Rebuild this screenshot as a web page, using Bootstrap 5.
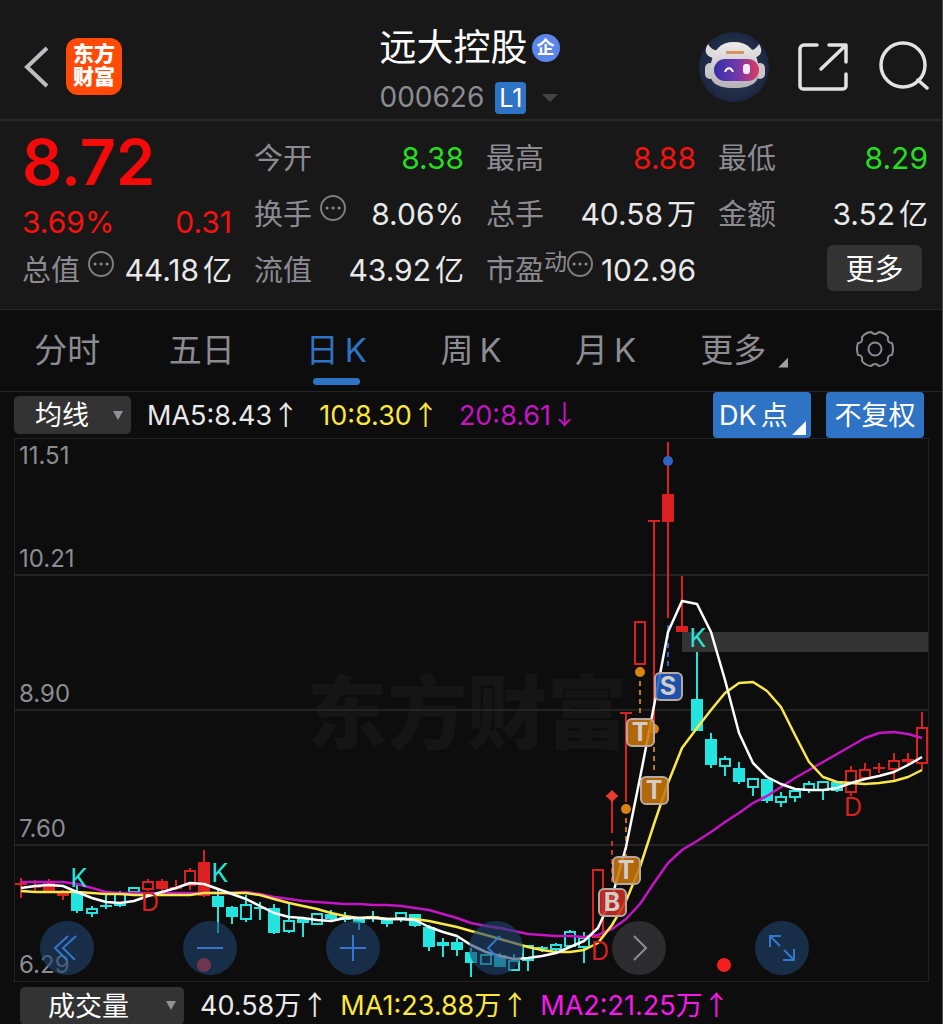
<!DOCTYPE html>
<html lang="zh-CN" data-bs-theme="dark">
<head>
<meta charset="utf-8">
<meta name="viewport" content="width=device-width, initial-scale=1">
<title>远大控股 000626</title>
<link href="https://cdn.jsdelivr.net/npm/bootstrap@5.3.0/dist/css/bootstrap.min.css" rel="stylesheet">
<style>
  :root { --panel:#181818; --ink:#e9e9ea; --dim:#8b8b91; --blue:#2f73c5; --up:#f5120f; --down:#27dd22; --yellow:#fbe73f; --purple:#c414c4; }
  body { background:#0d0d0d; color:var(--ink); font-family:Inter,"Noto Sans CJK SC",sans-serif; line-height:1.2; border-right:1px solid #4a4a4a; }
  svg { display:block; }
  .icon-btn { background:none; border:0; padding:0; color:#e2e2e2; }
  .topbar { background:var(--panel); border-bottom:2px solid #272727; height:121px; display:grid; grid-template-columns:1fr auto 1fr; padding:14px 13px 0 10px; }
  .topbar-start { padding-left:14px; }
  .brand { width:56px; height:57px; border-radius:12px; background:#ff4a08; color:#fff; font-weight:900; font-size:21px; line-height:23px; }
  .title-block { padding-top:10px; }
  .stock-name { font-size:37px; line-height:48px; font-weight:400; }
  .firm { width:28px; height:28px; border-radius:50%; background:#5b85e8; color:#fff; font-size:18px; font-weight:700; line-height:28px; }
  .code-row { padding-top:9px; }
  .code { font-size:28px; color:var(--dim); }
  .level { width:31px; height:32px; border-radius:4px; background:var(--blue); color:#fff; font-size:25px; line-height:32px; margin-left:11px; }
  .tri-down { border:8px solid transparent; border-top-color:#444; border-bottom:0; }
  .quotes { background:var(--panel); border-bottom:1px solid #262626; display:grid; grid-template-columns:repeat(4,1fr); column-gap:22px; padding:9px 14px 11px 22px; font-size:30px; }
  .cell { height:56px; display:flex; align-items:center; justify-content:space-between; white-space:nowrap; }
  .cell .tag { color:var(--dim); display:flex; font-size:29px; padding-top:3px; }
  .cell .hint { margin-top:-3px; }
  .cell sup { font-size:23px; top:-6px; line-height:29px; }
  .unit { margin-left:4px; font-size:29px; }
  .price { font-size:63px; line-height:64px; height:72px; font-weight:600; color:#f40a08; }
  .delta { height:40px; color:var(--up); }
  .up { color:var(--up); } .down { color:var(--down); }
  .more-btn { width:95px; height:46px; background:#333; border-radius:6px; border:0; color:#fff; font-size:29px; line-height:46px; padding:2px 0 0; margin:0 6px 4px 0; }
  .periods { height:82px; border-bottom:1px solid #242424; }
  .periods .nav-item { flex:1 1 0; }
  .periods .nav-link { height:81px; padding:0; color:var(--dim); font-size:33px; display:flex; align-items:center; justify-content:center; position:relative; }
  .periods .nav-link.active { color:var(--blue); }
  .periods .nav-link.active::after { content:""; position:absolute; bottom:6px; width:47px; height:7px; border-radius:4px; background:var(--blue); }
  .latin { margin-left:6px; }
  .corner { width:10px; height:10px; background:#a0a0a4; clip-path:polygon(100% 0,100% 100%,0 100%); }
  .more-tab .nav-link { padding-left:8px; }
  .more-tab .corner { margin:24px 0 0 12px; }
  .legend-bar { height:46px; padding:0 18px 0 14px; font-size:27px; white-space:nowrap; }
  .legend-bar > span { padding-top:2px; }
  .legend-bar > span + span { margin-left:20px; }
  .trend { font-family:"Noto Sans CJK SC",sans-serif; line-height:1; }
  .picker { background:#333 url("data:image/svg+xml,%3Csvg xmlns='http://www.w3.org/2000/svg' viewBox='0 0 10 9'%3E%3Cpath d='M0 0h10L5 9z' fill='%23909095'/%3E%3C/svg%3E") no-repeat right 8px center/10px 9px; border:0; border-radius:5px; color:#fff; appearance:none; font-size:27px; padding:2px 0 0 21px; width:117px; height:38px; line-height:36px; }
  .picker.wide { width:164px; padding-left:28px; }
  .tool { height:46px; width:98px; border:0; border-radius:4px; background:var(--blue); color:#fff; font-size:27px; padding:2px 0 0; position:relative; }
  .dk { padding-left:6px; }
  .tool + .tool { margin-left:15px; }
  .tool .unit { font-size:27px; }
  .tool .corner { position:absolute; right:5px; bottom:3px; width:14px; height:14px; background:#fff; }
  .yellow { color:var(--yellow); } .purple { color:var(--purple); } .pink { color:#f51ae8; }
  .chart-wrap { position:relative; margin:0 13px 0 14px; }
  .chart-wrap > svg { width:100%; height:auto; }
  .axis-text { font-size:24px; fill:var(--dim); }
  .signal { font-size:25px; }
  .chart-ctl { position:absolute; left:26px; right:120px; bottom:7px; display:flex; justify-content:space-between; }
  .round-btn { width:54px; height:54px; border-radius:50%; border:0; padding:0; background:rgba(32,68,110,.62); color:#3376cc; }
  .round-btn.off { background:rgba(62,62,66,.65); color:#8d8d91; }
  .volume-bar { height:42px; padding:5px 14px 0 20px; font-size:27px; white-space:nowrap; overflow:hidden; }
  .volume-bar > span { padding-top:2px; }
  .volume-bar > span + span { margin-left:12px; }
</style>
</head>
<body>
<header class="topbar">
  <div class="topbar-start d-flex align-items-start pt-4">
    <button class="icon-btn mt-2" aria-label="返回"><svg width="26" height="42" viewBox="0 0 26 42" fill="none" stroke="#bdbdbf" stroke-width="4"><path d="M23 2 3 21l20 19"/></svg></button>
    <div class="brand text-center ms-3 pt-1"><div>东方</div><div>财富</div></div>
  </div>
  <div class="title-block">
    <div class="d-flex align-items-center"><h1 class="stock-name m-0">远大控股</h1><span class="firm text-center ms-1">企</span></div>
    <div class="code-row d-flex align-items-center"><span class="code">000626</span><span class="level text-center">L1</span><span class="tri-down ms-3"></span></div>
  </div>
  <div class="d-flex justify-content-end align-items-start pt-3">
    <button class="icon-btn" aria-label="助手"><svg class="robot" width="70" height="72" viewBox="0 0 70 72">
      <defs>
        <radialGradient id="halo"><stop offset="0" stop-color="#35435e"/><stop offset="1" stop-color="#1b2740"/></radialGradient>
        <linearGradient id="visor"><stop offset="0" stop-color="#3430a4"/><stop offset=".5" stop-color="#7037ad"/><stop offset="1" stop-color="#dd3b63"/></linearGradient>
        <linearGradient id="shell" x2="0" y2="1"><stop offset="0" stop-color="#eeebea"/><stop offset="1" stop-color="#b5b2b8"/></linearGradient>
      </defs>
      <circle cx="35" cy="37" r="35" fill="url(#halo)"/>
      <path d="M9 14c-4 6-3 12 5 14l8-7c-6 0-10-2-13-7zM60 14c4 6 3 12-5 14l-8-7c6 0 10-2 13-7z" fill="#dedbdc"/>
      <rect x="6" y="33" width="10" height="16" rx="5" fill="#c9c5ca"/><rect x="56" y="33" width="10" height="16" rx="5" fill="#c9c5ca"/>
      <path d="M35 12c14 0 21 8 24 21 4 18-4 25-24 25S8 51 12 33c3-13 9-21 23-21z" fill="url(#shell)"/>
      <rect x="27" y="21" width="18" height="3" rx="1" fill="#d8925b"/>
      <rect x="15" y="29" width="45" height="22" rx="11" fill="url(#visor)"/>
      <path d="M26 42c2-5 6-5 8 0" stroke="#fff" stroke-width="2" fill="none"/><rect x="44" y="34" width="7" height="10" rx="3" fill="#f4e9fa"/>
    </svg></button>
    <button class="icon-btn ms-4 mt-2 ps-1" aria-label="分享"><svg width="52" height="56" viewBox="0 0 52 56" fill="none" stroke="currentColor" stroke-width="3.500" stroke-linecap="round" stroke-linejoin="round"><path d="M20 7H7a4 4 0 0 0-4 4v37a3 3 0 0 0 3 3h40a3 3 0 0 0 3-3V36M32 7h17v17M48 8 24 31"/></svg></button>
    <button class="icon-btn ms-4 mt-2 ps-1" aria-label="搜索"><svg width="52" height="56" viewBox="0 0 52 56" fill="none" stroke="currentColor" stroke-width="3.500" stroke-linecap="round"><circle cx="26" cy="27" r="22"/><path d="m41 42 9 8"/></svg></button>
  </div>
</header>

<section class="quotes">
  <div>
    <div class="price">8.72</div>
    <div class="cell delta"><span>3.69%</span><span>0.31</span></div>
    <div class="cell"><span class="tag">总值<svg class="hint ms-2" width="26" height="26" viewBox="0 0 26 26"><circle cx="13" cy="13" r="12" fill="none" stroke="#7d7d80" stroke-width="2"/><path d="M7 13h.1M13 13h.1M19 13h.1" stroke="#8b8b91" stroke-width="3" stroke-linecap="round"/></svg></span><span>44.18<span class="unit">亿</span></span></div>
  </div>
  <div>
    <div class="cell"><span class="tag">今开</span><span class="down">8.38</span></div>
    <div class="cell"><span class="tag">换手<svg class="hint ms-2" width="26" height="26" viewBox="0 0 26 26"><circle cx="13" cy="13" r="12" fill="none" stroke="#7d7d80" stroke-width="2"/><path d="M7 13h.1M13 13h.1M19 13h.1" stroke="#8b8b91" stroke-width="3" stroke-linecap="round"/></svg></span><span>8.06%</span></div>
    <div class="cell"><span class="tag">流值</span><span>43.92<span class="unit">亿</span></span></div>
  </div>
  <div>
    <div class="cell"><span class="tag">最高</span><span class="up">8.88</span></div>
    <div class="cell"><span class="tag">总手</span><span>40.58<span class="unit">万</span></span></div>
    <div class="cell"><span class="tag">市盈<sup>动</sup><svg class="hint" width="26" height="26" viewBox="0 0 26 26"><circle cx="13" cy="13" r="12" fill="none" stroke="#7d7d80" stroke-width="2"/><path d="M7 13h.1M13 13h.1M19 13h.1" stroke="#8b8b91" stroke-width="3" stroke-linecap="round"/></svg></span><span>102.96</span></div>
  </div>
  <div>
    <div class="cell"><span class="tag">最低</span><span class="down">8.29</span></div>
    <div class="cell"><span class="tag">金额</span><span>3.52<span class="unit">亿</span></span></div>
    <div class="cell justify-content-end"><button class="more-btn">更多</button></div>
  </div>
</section>

<nav>
  <ul class="nav periods">
    <li class="nav-item"><a class="nav-link" href="#">分时</a></li>
    <li class="nav-item"><a class="nav-link" href="#">五日</a></li>
    <li class="nav-item"><a class="nav-link active" href="#" aria-current="page">日<span class="latin">K</span></a></li>
    <li class="nav-item"><a class="nav-link" href="#">周<span class="latin">K</span></a></li>
    <li class="nav-item"><a class="nav-link" href="#">月<span class="latin">K</span></a></li>
    <li class="nav-item more-tab"><a class="nav-link" href="#">更多<span class="corner"></span></a></li>
    <li class="nav-item"><a class="nav-link pb-1" href="#" aria-label="设置"><svg width="40" height="40" viewBox="-20 -20 40 40" fill="none" stroke="currentColor" stroke-width="2" stroke-linejoin="round"><path d="M17-6Q19 0 17 6Q12 6 13 12Q9.500 16.500 4 17Q0 13-4 17Q-9.500 16.500-13 12Q-12 6-17 6Q-19 0-17-6Q-12-6-13-12Q-9.500-16.500-4-17Q0-13 4-17Q9.500-16.500 13-12Q12-6 17-6Z"/><circle r="6.500"/></svg></a></li>
  </ul>
</nav>

<div class="legend-bar d-flex align-items-center">
  <select class="picker me-3" aria-label="主图指标"><option>均线</option></select>
  <span>MA5:8.43<span class="trend">↑</span></span>
  <span class="yellow">10:8.30<span class="trend">↑</span></span>
  <span class="purple">20:8.61<span class="trend">↓</span></span>
  <button class="tool dk ms-auto text-start">DK<span class="unit">点</span><span class="corner"></span></button>
  <button class="tool">不复权</button>
</div>

<main class="chart-wrap">
  <svg id="chart" viewBox="14 438 915 544" role="img" aria-label="日K线图">
    <text x="307" y="742" font-size="80" font-weight="900" fill="#151515">东方财富</text>
    <g fill="none" stroke="#232323"><rect x="14.500" y="438.500" width="914" height="543"/><path d="M14 575h915M14 710h915M14 845h915" stroke-width="2"/></g>
    <rect x="682" y="632" width="246" height="20" fill="#343434"/>
    <g class="axis-text"><text x="19" y="464">11.51</text><text x="19" y="567">10.21</text><text x="19" y="702">8.90</text><text x="19" y="837">7.60</text><text x="19" y="973">6.29</text></g>
    <g id="candles" stroke-width="2"></g>
    <g stroke-width="2" stroke-dasharray="5 4"><path d="M612 841v44" stroke="#dc2a22"/><path d="M626 818v38M640 681v36M654 738v36" stroke="#c4770c"/><path d="M668 625v44" stroke="#2c62c2"/></g>
    <g fill="none" stroke-width="2.500" stroke-linejoin="round">
      <polyline id="ma20" stroke="#c414c4"/><polyline id="ma10" stroke="#fbe749"/><polyline id="ma5" stroke="#fff"/>
    </g>
    <path d="m612 790 6 6-6 6-6-6z" fill="#ea3a2c"/>
    <g fill="#d98310"><circle cx="626" cy="809" r="5"/><circle cx="640" cy="672" r="5"/><circle cx="654" cy="729" r="5"/></g>
    <circle cx="668" cy="461" r="5" fill="#2d62c8"/>
    <g id="badges" font-weight="700" font-size="25" text-anchor="middle"></g>
    <g class="signal" text-anchor="middle"><g fill="#27e4dd"><text x="79" y="887">K</text><text x="220" y="882">K</text><text x="698" y="647">K</text></g><g fill="#d8211f"><text x="150" y="911">D</text><text x="600" y="960">D</text><text x="853" y="816">D</text></g></g>
    <g fill="#f5201e"><circle cx="204" cy="965" r="7"/><circle cx="724" cy="965" r="7"/></g>
  </svg>
  <div class="chart-ctl">
    <button class="round-btn" aria-label="最早"><svg width="54" height="54" fill="none" stroke="currentColor" stroke-width="2"><path d="M28 15 15 27l12 12M36 15 23 27l12 12"/></svg></button>
    <button class="round-btn" aria-label="缩小"><svg width="54" height="54" stroke="currentColor" stroke-width="2"><path d="M14 27h26"/></svg></button>
    <button class="round-btn" aria-label="放大"><svg width="54" height="54" stroke="currentColor" stroke-width="2"><path d="M14 27h26M27 14v26"/></svg></button>
    <button class="round-btn" aria-label="向左"><svg width="54" height="54" fill="none" stroke="currentColor" stroke-width="2"><path d="M31 15 19 27l12 12"/></svg></button>
    <button class="round-btn off" aria-label="向右"><svg width="54" height="54" fill="none" stroke="currentColor" stroke-width="2"><path d="m22 15 12 12-12 12"/></svg></button>
    <button class="round-btn" aria-label="全屏"><svg width="54" height="54" fill="none" stroke="currentColor" stroke-width="2"><path d="M15 26V15h11M15 15l10 10M39 28v11H28M39 39 29 29"/></svg></button>
  </div>
</main>

<div class="volume-bar d-flex align-items-center">
  <select class="picker wide me-3" aria-label="副图指标"><option>成交量</option></select>
  <span>40.58万<span class="trend">↑</span></span>
  <span class="yellow">MA1:23.88万<span class="trend">↑</span></span>
  <span class="pink">MA2:21.25万<span class="trend">↑</span></span>
</div>

<script>
// kind (r/c = red/cyan, F = filled, H = hollow), wick top, body top, body bottom, wick bottom
const bars = `rF 878 883 885 898|rF 880 886 888 892|rF 879 881 891 892|rF 890 892 896 900|cF 884 892 911 913|cH 906 909 913 917|cF 895 905 907 909|cH 891 894 905 907|cH 887 888 892 892|rH 879 882 889 891|rF 879 881 889 891|rF 880 887 889 890|rH 868 871 885 890|rF 850 862 896 897|cF 888 896 907 933|cF 906 907 917 924|cH 895 905 919 922|cF 902 907 909 920|cF 904 908 933 934|cH 904 921 931 933|cF 917 918 923 937|cH 914 914 924 924|cF 910 914 919 920|cF 912 917 920 922|cF 918 918 923 930|cF 911 916 918 922|cF 919 919 924 927|cH 912 913 918 922|cF 914 914 926 927|cF 925 927 947 951|cF 938 942 946 957|cF 938 942 950 956|cF 948 952 963 977|cH 955 955 964 964|cF 953 955 967 967|cH 954 961 970 971|cH 946 946 960 971|cF 946 947 949 952|cH 943 945 949 953|cH 930 932 946 948|cH 932 938 947 963|rH 870 870 937 937|rF 792 795 797 833|rF 712 712 714 802|rH 621 622 664 664|rF 520 520 522 722|rF 442 494 522 618|rF 576 626 632 632|cF 652 699 731 731|cF 733 739 765 768|cH 756 759 766 776|cF 762 768 782 784|cH 779 779 787 796|cF 779 779 801 803|cH 792 797 802 807|cH 790 791 797 802|cH 781 784 790 793|cH 781 782 790 800|cF 782 782 791 792|rH 766 771 792 796|rH 763 770 778 778|rF 763 767 769 773|rH 753 761 769 781|rF 753 759 762 764|rH 712 728 763 770`.split('|');
const col = { r: '#dc1f1f', c: '#22e5e0' };
const xAt = i => Math.round(21.2 + i * 14.07);
document.getElementById('candles').innerHTML = bars.map((b, i) => {
  const [k, hi, top, bot, lo] = b.split(' ').map((v, n) => n ? +v : v), x = xAt(i), c = col[k[0]];
  const wick = k[1] === 'F' ? `M${x} ${hi}V${lo}` : `M${x} ${hi}V${top}M${x} ${bot}V${lo}`;
  const body = k[1] === 'F' ? `<rect x="${x - 6}" y="${top}" width="12" height="${bot - top}" fill="${c}"/>`
    : `<rect x="${x - 5}" y="${top}" width="10" height="${bot - top}" fill="none" stroke="${c}"/>`;
  return `<path d="${wick}" stroke="${c}"/>${body}`;
}).join('');
// moving averages: one level per trading day
const averages = {
  ma5: [888,886,885,886,892,898,902,903,901,896,892,888,883,884,889,894,899,906,913,917,918,920,921,918,918,918,919,919,920,927,932,936,945,952,956,959,958,956,953,947,941,928,897,847,778,706,632,601,604,632,680,733,763,777,784,789,790,790,788,783,779,776,772,765,757],
  ma10: [891,892,892,892,892,893,894,894,895,895,895,895,895,893,893,893,893,895,899,903,906,909,913,916,918,917,919,919,919,921,924,927,931,935,939,943,947,950,952,952,950,943,925,901,867,824,783,748,728,710,693,683,682,691,707,735,762,777,782,783,784,783,781,777,770],
  ma20: [882,882,882,882,884,888,892,893,893,893,893,893,893,893,893,893,892,894,897,899,901,902,903,904,904,905,905,906,908,910,914,918,923,926,928,931,934,935,936,936,937,935,929,919,904,883,863,850,841,832,822,813,803,796,787,778,770,762,754,746,738,733,732,734,738]
};
for (const [id, ys] of Object.entries(averages))
  document.getElementById(id).setAttribute('points', ys.map((y, i) => xAt(i) + ',' + y).join(' '));
document.getElementById('badges').innerHTML = [[612,902,'B','#c92b22'],[626,870,'T','#c87508'],[640,732,'T','#c87508'],[654,790,'T','#c87508'],[668,686,'S','#1f5cc4']]
  .map(([x, y, t, c]) => `<rect x="${x - 13}" y="${y - 13}" width="27" height="27" rx="5" fill="${c}" fill-opacity=".88" stroke="#b8a8a0" stroke-width="2"/><text x="${x}" y="${y + 9}" fill="#d2cdca">${t}</text>`).join('');
</script>
<script src="https://cdn.jsdelivr.net/npm/bootstrap@5.3.0/dist/js/bootstrap.bundle.min.js"></script>
</body>
</html>
